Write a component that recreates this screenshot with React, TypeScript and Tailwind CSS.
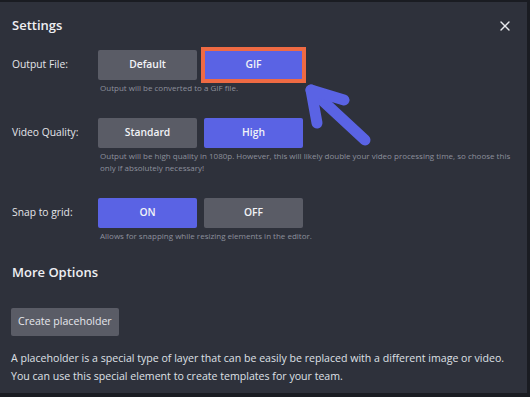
import { X } from "lucide-react";

function Choice({
  label,
  active,
  highlight,
}: {
  label: string;
  active?: boolean;
  highlight?: boolean;
}) {
  return (
    <button
      className={
        "w-[99px] h-[30px] text-[10.3px] font-semibold text-[#f2f3f7] " +
        (active ? "bg-[#5a63e4] " : "bg-[#5a5c66] ") +
        (highlight
          ? "outline-solid outline-[4px] outline-[#ef6a43] -outline-offset-[1px]"
          : "rounded-[2px]")
      }
    >
      {label}
    </button>
  );
}

function SettingRow({
  label,
  options,
  help,
}: {
  label: string;
  options: { label: string; active?: boolean; highlight?: boolean }[];
  help: React.ReactNode;
}) {
  return (
    <div className="flex">
      <div className="w-[86px] h-[30px] flex items-center text-[10.3px] text-[#e4e5ea]">
        {label}
      </div>
      <div className="flex flex-col">
        <div className="flex gap-[7px]">
          {options.map((o) => (
            <Choice key={o.label} {...o} />
          ))}
        </div>
        <p className="mt-[2px] pl-[2px] text-[8px] leading-[12px] text-[#8d909b] whitespace-nowrap">
          {help}
        </p>
      </div>
    </div>
  );
}

export default function App() {
  return (
    <div
      className="w-[530px] h-[397px] bg-[#1a1c22] pt-[2px] pr-[3px] pb-[4px]"
      style={{ fontFamily: '"Open Sans", "Noto Sans", sans-serif' }}
    >
      <div className="relative h-full bg-[#2e313b] px-[12px]">
        {/* Header */}
        <div className="flex items-center justify-between h-[44px] pt-[4px]">
          <h1 className="text-[13px] font-semibold text-[#eeeff3]">Settings</h1>
          <button className="text-[#e8e9ee] mr-[2px]">
            <X size={16} strokeWidth={2} />
          </button>
        </div>

        <div className="mt-[4px]">
          <SettingRow
            label="Output File:"
            options={[
              { label: "Default" },
              { label: "GIF", active: true, highlight: true },
            ]}
            help="Output will be converted to a GIF file."
          />
        </div>

        <div className="mt-[24px]">
          <SettingRow
            label="Video Quality:"
            options={[{ label: "Standard" }, { label: "High", active: true }]}
            help={
              <>
                Output will be high quality in 1080p. However, this will likely
                double your video processing time, so choose this
                <br />
                only if absolutely necessary!
              </>
            }
          />
        </div>

        <div className="mt-[24px]">
          <SettingRow
            label="Snap to grid:"
            options={[{ label: "ON", active: true }, { label: "OFF" }]}
            help="Allows for snapping while resizing elements in the editor."
          />
        </div>

        {/* More Options */}
        <h2 className="mt-[21px] text-[13px] font-semibold text-[#eeeff3]">
          More Options
        </h2>

        <button className="mt-[25px] h-[28px] px-[7px] rounded-[2px] bg-[#5a5c66] text-[10.6px] text-[#e6e7ec] -ml-[1px]">
          Create placeholder
        </button>

        <p className="mt-[13px] text-[10.6px] leading-[18px] text-[#dfe0e6] -ml-[1px] whitespace-nowrap">
          A placeholder is a special type of layer that can be easily be replaced
          with a different image or video.
          <br />
          You can use this special element to create templates for your team.
        </p>

        {/* annotation arrow */}
        <svg
          className="absolute left-[298px] top-[77px]"
          width="80"
          height="75"
          viewBox="0 0 80 75"
        >
          <g
            stroke="#5a63e4"
            strokeWidth="11"
            strokeLinecap="round"
            strokeLinejoin="round"
            fill="none"
          >
            <path d="M67 61 L13 11" />
            <path d="M46 21 L13 11 L19 44" />
          </g>
        </svg>
      </div>
    </div>
  );
}
